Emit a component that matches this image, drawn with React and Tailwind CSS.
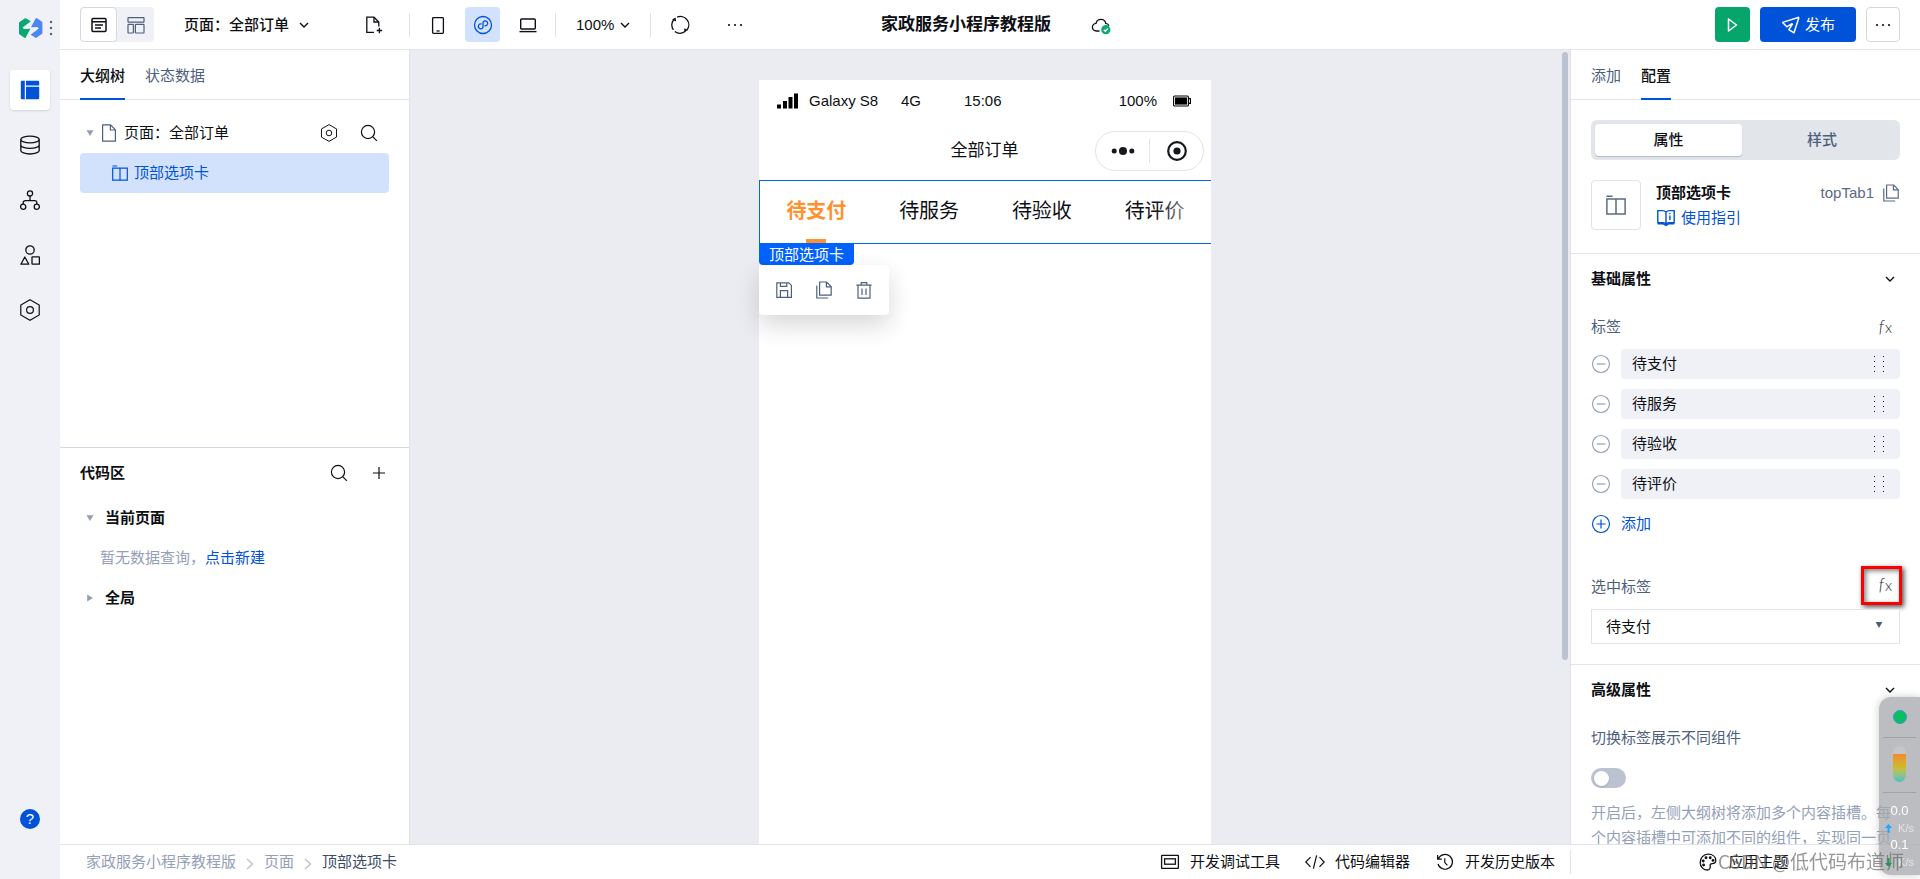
import { useState } from 'react';

function Svg({ size = 20, className = '', children, sw = 1.2 }) {
  return (
    <svg
      width={size}
      height={size}
      viewBox={`0 0 ${size} ${size}`}
      fill="none"
      stroke="currentColor"
      strokeWidth={sw}
      className={`shrink-0 ${className}`}
      aria-hidden="true"
    >
      {children}
    </svg>
  );
}

const Logo = () => (
  <svg width="24" height="20" viewBox="0 0 24 20" aria-hidden="true" className="shrink-0">
    <path d="M0 4.4 5.600.4q.8-.5 1.600 0l4.600 2.800L3.600 9.600 5 11l6.400-.2-4.600 8.600q-.6.8-1.400.4L0 16z" fill="#0aa872" />
    <path d="M23.400 15.600 17.800 19.600q-.8.5-1.600 0l-4.600-2.800 8.200-6.400L18.400 9l-6.400.2L16.600.6q.6-.8 1.400-.4L23.400 4z" fill="#4a87f2" />
  </svg>
);

const OutlineLayout = () => (
  <Svg sw={1.5}>
    <rect x="3" y="3.5" width="14" height="13" rx="1" />
    <path d="M3 6.8h14M6 10h8M6 13h6" />
  </Svg>
);
const GridLayout = () => (
  <Svg sw={1.2}>
    <rect x="2" y="2.6" width="16" height="4.6" rx=".5" />
    <rect x="2" y="9.4" width="5.4" height="8.6" rx=".5" />
    <rect x="9.4" y="9.4" width="8.6" height="8.6" rx=".5" />
  </Svg>
);
const Chevron = ({ className = '' }) => (
  <Svg size={10} sw={1.4} className={className}>
    <path d="m1 3 4 4 4-4" />
  </Svg>
);
const FilePlus = () => (
  <Svg sw={1.3}>
    <path d="M10 17.400H2.800V2.200H10l4.800 4.800v4.400" />
    <path d="M10 2.400V7h4.600M15.400 12.800v5.400M12.700 15.500h5.400" />
  </Svg>
);
const Phone = () => (
  <Svg sw={1.3}>
    <rect x="4.6" y="2.6" width="10.8" height="15.8" rx=".8" />
    <path d="M8.6 16h3" />
  </Svg>
);
const MiniProgram = () => (
  <Svg sw={1.3}>
    <circle cx="10" cy="10" r="8.500" />
    <path d="M8.600 9.100A2.400 2.400 0 1 0 10 12.200V7.600a2.400 2.400 0 1 1 1.500 3" />
  </Svg>
);
const Laptop = () => (
  <Svg sw={1.4}>
    <rect x="2.7" y="4" width="14.600" height="10" rx="1" />
    <path d="M1.500 16.600h17" />
  </Svg>
);
const Refresh = () => (
  <Svg sw={1.3}>
    <path d="M3.400 14.800A8.300 8.300 0 0 1 4.600 3.700M7.200 2.200a8.300 8.300 0 0 1 9.600 13M15.400 16.300A8.300 8.300 0 0 1 4.800 16.500" />
    <path d="m2.200 4.800 3.400-2.200.6 4zM17.900 15l-3.700-1.800.2 4z" fill="currentColor" stroke="none" />
  </Svg>
);
const Dots = () => (
  <Svg>
    <g fill="currentColor" stroke="none">
      <circle cx="4" cy="10" r="1.100" />
      <circle cx="10" cy="10" r="1.100" />
      <circle cx="16" cy="10" r="1.100" />
    </g>
  </Svg>
);
const CloudDone = () => (
  <Svg sw={1.300}>
    <path d="M8.500 16H5.400A3.800 3.800 0 0 1 5 8.400a5 5 0 0 1 9.800 0c1.700.2 2.800 1.200 3.200 2.400" />
    <circle cx="14.800" cy="14.700" r="4.600" fill="#0aa872" stroke="none" />
    <path d="m12.800 14.700 1.500 1.500 2.600-2.700" stroke="#fff" />
  </Svg>
);
const Play = () => (
  <Svg sw={1.500}>
    <path d="M6.500 4v12l8-6z" strokeLinejoin="round" />
  </Svg>
);
const Send = () => (
  <Svg sw={1.500}>
    <path d="M18 2.200 1.600 7.400l4.200 4.400 5.600-3.400M18 2.200 13 17.800l-5.200-3.200 4-6" strokeLinejoin="round" />
  </Svg>
);

const PanelSolid = () => (
  <Svg>
    <g fill="#0052d9" stroke="none">
      <path d="M2 .8h2.800v18.400H2A1.200 1.200 0 0 1 .8 18V2A1.200 1.200 0 0 1 2 .8z" />
      <path d="M6 .8h12A1.200 1.200 0 0 1 19.200 2v3.600H6zM6 6.800h13.200V18a1.200 1.200 0 0 1-1.200 1.200H6z" />
    </g>
  </Svg>
);
const Database = () => (
  <Svg sw={1.300}>
    <ellipse cx="10" cy="4.500" rx="9.200" ry="3.400" />
    <path d="M.8 4.500v11C.8 17.400 5 19 10 19s9.200-1.600 9.200-3.500v-11M.8 10c0 1.900 4.200 3.400 9.200 3.400s9.200-1.500 9.200-3.400" />
  </Svg>
);
const Flow = () => (
  <Svg sw={1.300}>
    <circle cx="10" cy="3.400" r="2.600" />
    <circle cx="3.200" cy="16.700" r="2.600" />
    <circle cx="16.800" cy="16.700" r="2.600" />
    <path d="M10 6v4.600M3.200 14v-1.400a2 2 0 0 1 2-2h9.600a2 2 0 0 1 2 2V14" />
  </Svg>
);
const Shapes = () => (
  <Svg sw={1.300}>
    <circle cx="10" cy="5" r="4.200" />
    <path d="M4.800 12 .9 19.200h7.900z" strokeLinejoin="round" />
    <rect x="12" y="11.800" width="7.400" height="7.400" rx=".5" />
  </Svg>
);
const Hexagon = ({ size = 20 }) => (
  <svg width={size} height={size} viewBox="0 0 20 22" fill="none" stroke="currentColor" strokeWidth="1.200" aria-hidden="true" className="shrink-0">
    <path d="M10 .8 19.200 6v10L10 21.200.8 16V6z" />
    <circle cx="10" cy="11" r="3.400" />
  </svg>
);
const Help = () => (
  <span className="flex size-5 items-center justify-center rounded-full bg-[#0052d9] text-[15px] leading-5 text-white">?</span>
);

const Caret = ({ open }) => (
  <svg width="8" height="8" viewBox="0 0 8 8" fill="#93a0b8" aria-hidden="true" className="shrink-0">
    {open ? <path d="M.4 1.200h7.200L4 7z" /> : <path d="M1.200.4v7.200L7 4z" />}
  </svg>
);
const FileIcon = () => (
  <Svg size={18} sw={1.200} className="text-[#4e5f7e]">
    <path d="M2.600.8h8l4.800 5v11.400H2.600z" strokeLinejoin="round" />
    <path d="M10.400 1v5h5" />
  </Svg>
);
const TabIcon = ({ size = 16 }) => (
  <svg width={size} height={size} viewBox="0 0 16 16" fill="none" stroke="currentColor" strokeWidth="1.200" aria-hidden="true" className="shrink-0">
    <path d="M.4 1h4.800M.7 3.200h14.600v11.900H.7zM8 3.200v11.900" />
  </svg>
);
const Search = () => (
  <Svg size={18}>
    <circle cx="8" cy="8" r="6.600" />
    <path d="m12.900 12.900 4 4" />
  </Svg>
);
const Plus = () => (
  <Svg size={18} sw={1.200}>
    <path d="M9 3v12M3 9h12" />
  </Svg>
);
const Save = () => (
  <Svg size={18} sw={1.200}>
    <path d="M1.800 1.800h12l2.600 2.600v12H1.800z" strokeLinejoin="round" />
    <path d="M5.400 2v3.400h6.400V2M5.400 16.200V9.600h7.200v6.600" />
  </Svg>
);
const Copy = () => (
  <Svg size={18} sw={1.200}>
    <path d="M4.600 1h7l4.600 4.600v8.600H4.600z" strokeLinejoin="round" />
    <path d="M11.400 1v4.800h4.800M1.800 4.400V17h11.400" />
  </Svg>
);
const Trash = () => (
  <Svg size={18} sw={1.200}>
    <path d="M1.400 4.200h15.200M6.200 4V1.600h5.600V4M3 4.200v13h12v-13M7 7.600V14M11 7.600V14" />
  </Svg>
);
const Book = () => (
  <Svg sw={1.400}>
    <path d="M10 4c-1-1-2-1.400-3.400-1.400H1.800v12.200h5.400c1.200 0 2.200.4 2.800 1.400.6-1 1.600-1.400 2.800-1.400h5.400V2.600h-4.800C12 2.600 11 3 10 4zM10 4v12" />
    <path d="M1.800 15.800h5.600L10 17.400l2.600-1.600h5.600M13.900 7.600V12M13.900 5v1.300" />
  </Svg>
);
const Minus = () => (
  <Svg>
    <circle cx="10" cy="10" r="8.500" />
    <path d="M5.600 10h8.800" />
  </Svg>
);
const PlusCircle = () => (
  <Svg>
    <circle cx="10" cy="10" r="8.500" />
    <path d="M5.400 10h9.200M10 5.400v9.200" />
  </Svg>
);
const Grip = () => (
  <svg width="11" height="18" viewBox="0 0 11 18" fill="#1a1f2b" aria-hidden="true" className="shrink-0">
    {[1, 6, 11, 16].map((y) => (
      <g key={y}>
        <rect x="0" y={y} width="1" height="1" />
        <rect x="9" y={y} width="1" height="1" />
      </g>
    ))}
  </svg>
);
const DebugTool = () => (
  <Svg sw={1.300}>
    <rect x="1.600" y="3.400" width="16.800" height="13" rx=".6" />
    <rect x="4.600" y="6.800" width="10.800" height="5.400" />
  </Svg>
);
const Code = () => (
  <Svg>
    <path d="M5.500 5.200.8 10l4.700 4.800M14.500 5.200l4.700 4.800-4.700 4.800M11.600 3.400 8.400 16.600" />
  </Svg>
);
const History = () => (
  <Svg>
    <path d="M3.400 6.600A7.400 7.400 0 1 1 3 12M2.600 3v4.200h4.200M9.800 6.200v4.400l2.600 2.800" />
  </Svg>
);
const Palette = () => (
  <Svg sw={1.300}>
    <path d="M10 2.200c4.600 0 7.800 2.600 7.800 6.400 0 2.400-1.600 3-3.600 3-1.600 0-2.400.8-2 2.400.4 2-.6 4-3 4-3.800 0-7-3.200-7-7.600S5.600 2.200 10 2.200z" />
    <circle cx="8" cy="5.800" r=".8" />
    <circle cx="12.200" cy="5.800" r=".8" />
    <circle cx="5.200" cy="9" r=".8" />
    <circle cx="5.600" cy="13" r=".8" />
    <circle cx="15" cy="8.400" r=".8" />
  </Svg>
);

function IconButton({ label, className = '', children }) {
  return (
    <button type="button" aria-label={label} className={`flex shrink-0 items-center justify-center ${className}`}>
      {children}
    </button>
  );
}

const Divider = () => <span className="h-6 w-px shrink-0 bg-[#dfe2e8]" />;

function Rail() {
  const items = [
    ['数据源', <Database />],
    ['流程', <Flow />],
    ['组件', <Shapes />],
    ['设置', <Hexagon size={22} />],
  ];
  return (
    <nav className="flex w-[60px] shrink-0 flex-col items-center bg-[#f0f1f6] pb-10">
      <div className="flex h-[55px] w-full items-center gap-1.5 pl-[19px]">
        <Logo />
        <svg width="4" height="16" viewBox="0 0 4 16" fill="#4e5f7e" aria-hidden="true">
          <circle cx="2" cy="2" r="1.200" />
          <circle cx="2" cy="8" r="1.200" />
          <circle cx="2" cy="14" r="1.200" />
        </svg>
      </div>
      <div className="flex flex-1 flex-col gap-[15px] pt-[15px]">
        <IconButton label="页面" className="size-10 rounded bg-white shadow-sm">
          <PanelSolid />
        </IconButton>
        {items.map(([label, icon]) => (
          <IconButton key={label} label={label} className="size-10">
            {icon}
          </IconButton>
        ))}
      </div>
      <IconButton label="帮助" className="size-10">
        <Help />
      </IconButton>
    </nav>
  );
}

function Header() {
  return (
    <header className="flex h-[50px] shrink-0 items-center border-b border-[#e1e4ea] px-5">
      <div className="flex flex-1 items-center">
        <div className="flex h-[35px] rounded bg-[#f0f1f6]">
          <IconButton label="大纲" className="w-[37px] rounded border border-[#d3d8e2] bg-white">
            <OutlineLayout />
          </IconButton>
          <IconButton label="布局" className="w-[37px] text-[#4e5f7e]">
            <GridLayout />
          </IconButton>
        </div>
        <button type="button" className="ml-[30px] flex items-center gap-[10px] font-medium">
          页面：全部订单
          <Chevron />
        </button>
        <IconButton label="新建页面" className="mr-5 ml-[50px] size-[30px]">
          <FilePlus />
        </IconButton>
        <Divider />
        <div className="mx-[10px] flex gap-[10px]">
          <IconButton label="手机" className="size-[35px]"><Phone /></IconButton>
          <IconButton label="小程序" className="size-[35px] rounded bg-[#d3e2fc] text-[#0052d9]"><MiniProgram /></IconButton>
          <IconButton label="电脑" className="size-[35px]"><Laptop /></IconButton>
        </div>
        <Divider />
        <button type="button" className="mx-5 flex items-center gap-1.5">
          100%
          <Chevron />
        </button>
        <Divider />
        <IconButton label="刷新" className="ml-[11px] size-[35px]"><Refresh /></IconButton>
        <IconButton label="更多" className="ml-5 size-[35px]"><Dots /></IconButton>
      </div>
      <div className="flex items-center gap-10 pl-3">
        <h1 className="text-[17px] leading-6 font-bold">家政服务小程序教程版</h1>
        <CloudDone />
      </div>
      <div className="flex flex-1 justify-end gap-[10px]">
        <IconButton label="预览" className="size-[35px] rounded bg-[#06a56c] text-white"><Play /></IconButton>
        <button type="button" className="flex h-[35px] items-center gap-1 rounded bg-[#0052d9] px-[21px] text-white">
          <Send />
          发布
        </button>
        <IconButton label="更多操作" className="h-[35px] w-[34px] rounded border border-[#d3d8e2]">
          <Dots />
        </IconButton>
      </div>
    </header>
  );
}

function Tabs({ items, active }) {
  return (
    <div className="flex h-[50px] shrink-0 gap-5 border-b border-[#e1e4ea] px-5">
      {items.map((t) => (
        <button
          key={t}
          type="button"
          className={
            t === active
              ? '-mb-px border-b-2 border-[#0052d9] pt-1 font-medium'
              : '-mb-px border-b-2 border-transparent pt-1 text-[#4e5f7e]'
          }
        >
          {t}
        </button>
      ))}
    </div>
  );
}

function LeftPanel() {
  return (
    <aside className="flex w-[350px] shrink-0 flex-col border-r border-[#dfe2e8]">
      <Tabs items={['大纲树', '状态数据']} active="大纲树" />
      <div className="h-[347px] shrink-0 px-5 pt-[13px]">
        <div className="flex h-10 items-center pl-1.5">
          <Caret open />
          <span className="mr-1.5 ml-1.5 flex"><FileIcon /></span>
          <span className="flex-1">页面：全部订单</span>
          <IconButton label="页面设置" className="size-10"><Hexagon size={18} /></IconButton>
          <IconButton label="搜索" className="size-10"><Search /></IconButton>
        </div>
        <button type="button" className="flex h-10 w-full items-center gap-1.5 rounded bg-[#d3e2fc] pl-8 text-[#0052d9]">
          <TabIcon />
          顶部选项卡
        </button>
      </div>
      <section className="flex-1 border-t border-[#d3d8e2] px-5">
        <div className="-mr-2.5 flex h-[50px] items-center">
          <h2 className="flex-1 font-bold">代码区</h2>
          <IconButton label="搜索代码" className="size-10"><Search /></IconButton>
          <IconButton label="新建代码" className="size-10"><Plus /></IconButton>
        </div>
        <button type="button" className="flex h-10 items-center gap-[11px] pl-1.5 font-bold">
          <Caret open />
          当前页面
        </button>
        <p className="flex h-10 items-center pl-5 text-[#93a0b8]">
          暂无数据查询，
          <a href="#new" className="text-[#0052d9]">点击新建</a>
        </p>
        <button type="button" className="flex h-10 items-center gap-[11px] pl-1.5 font-bold">
          <Caret />
          全局
        </button>
      </section>
    </aside>
  );
}

function Canvas() {
  const tabs = ['待支付', '待服务', '待验收', '待评价'];
  return (
    <main className="relative flex min-w-0 flex-1 justify-center bg-[#ebecf1] pt-[30px] pr-[10px]">
      <div className="flex w-[452px] flex-col bg-white">
        <div className="flex h-[42px] items-center pr-5 pl-[18px]">
          <svg width="22" height="16" viewBox="0 0 22 16" aria-hidden="true">
            <path d="M0 11.500h4v4H0zM6 8h4v7.500H6zM11.500 4h4v11.500h-4zM17 .5h4v15h-4z" />
          </svg>
          <span className="ml-[10px] w-[92px]">Galaxy S8</span>
          <span className="w-[63px]">4G</span>
          <span className="flex-1">15:06</span>
          <span>100%</span>
          <svg width="18" height="12" viewBox="0 0 18 12" aria-hidden="true" className="ml-4">
            <rect x=".6" y="1" width="14.800" height="10" rx="1" fill="none" stroke="#000" strokeWidth="1.100" />
            <rect x="2" y="2.400" width="12" height="7.200" />
            <path d="M15.600 3.600h1.800v4.800h-1.800" fill="none" stroke="#000" strokeWidth="1.100" />
          </svg>
        </div>
        <div className="grid h-[58px] grid-cols-[1fr_auto_1fr] items-center pr-[7px]">
          <span />
          <span className="pl-1.5 text-[17px] leading-6">全部订单</span>
          <div className="flex h-10 w-[109px] items-center justify-self-end rounded-full border border-[#e3e4ea]">
            <IconButton label="菜单" className="flex-1">
              <svg width="24" height="10" viewBox="0 0 24 10" fill="#16181c" aria-hidden="true">
                <circle cx="3.200" cy="5" r="2.500" />
                <circle cx="12" cy="5" r="4" />
                <circle cx="20.800" cy="5" r="2.500" />
              </svg>
            </IconButton>
            <span className="h-6 w-px bg-[#e3e4ea]" />
            <IconButton label="关闭" className="flex-1">
              <svg width="20" height="20" viewBox="0 0 20 20" aria-hidden="true">
                <circle cx="10" cy="10" r="8.800" fill="none" stroke="#16181c" strokeWidth="2.200" />
                <circle cx="10" cy="10" r="3.600" fill="#16181c" />
              </svg>
            </IconButton>
          </div>
        </div>
        <div className="relative grid h-16 grid-cols-4 border-y border-l border-[#0062ff] text-xl">
          {tabs.map((t, i) => (
            <button
              key={t}
              type="button"
              className={i === 0 ? 'flex flex-col items-center font-bold text-[#ff9130]' : 'flex flex-col items-center'}
            >
              <span className="flex flex-1 items-center pt-0.5">{t}</span>
              <span className={i === 0 ? 'h-1 w-5 bg-[#ff9130]' : 'h-1 w-5'} />
            </button>
          ))}
          <span className="pointer-events-none absolute inset-y-0 right-0 w-14 bg-linear-to-r from-white/0 to-white/90" />
        </div>
        <div className="flex h-[21px] w-[95px] items-center justify-center rounded-b bg-[#0062ff] text-white">顶部选项卡</div>
        <div className="flex h-[50px] w-[130px] items-center rounded bg-white px-[5px] text-[#4e5f7e] shadow-[0_10px_24px_rgba(0,0,0,0.16)]">
          <IconButton label="保存" className="size-10"><Save /></IconButton>
          <IconButton label="复制" className="size-10"><Copy /></IconButton>
          <IconButton label="删除" className="size-10"><Trash /></IconButton>
        </div>
      </div>
      <div className="absolute top-0.5 right-0.5 h-[608px] w-1.5 rounded-full bg-[#bbc3d1]" />
    </main>
  );
}

const Fx = () => (
  <span className="flex items-baseline font-['Lato',sans-serif] text-[17px] leading-5 font-light text-[#1a1f2b]">
    <i className="pr-px">f</i>
    <span className="text-[15px]">x</span>
  </span>
);

function SectionTitle({ children }) {
  return (
    <button type="button" className="flex h-[50px] w-full items-center justify-between pr-[5px] font-bold">
      {children}
      <Chevron />
    </button>
  );
}

function RightPanel() {
  const [on, setOn] = useState(false);
  const labels = ['待支付', '待服务', '待验收', '待评价'];
  return (
    <aside className="flex w-[350px] shrink-0 flex-col overflow-hidden border-l border-[#dfe2e8]">
      <Tabs items={['添加', '配置']} active="配置" />
      <div className="shrink-0 px-5 pt-5 pb-[23px]">
        <div className="flex h-10 rounded-md bg-[#e2e5ea] p-1 font-medium">
          <button type="button" className="w-[147px] rounded-sm bg-white shadow-[0_1px_1px_#b4bcc9]">属性</button>
          <button type="button" className="flex-1 pl-1.5 text-[#4e5f7e]">样式</button>
        </div>
        <div className="mt-5 flex">
          <span className="flex size-[50px] items-center justify-center rounded border border-[#dfe2e8] text-[#5a6a86]">
            <TabIcon size={20} />
          </span>
          <div className="ml-[15px] flex-1">
            <h2 className="leading-[25px] font-bold">顶部选项卡</h2>
            <a href="#guide" className="flex items-center gap-[5px] leading-[25px] text-[#0052d9]">
              <Book />
              使用指引
            </a>
          </div>
          <div className="flex h-[25px] items-center gap-2 text-[#5a6a86]">
            topTab1
            <Copy />
          </div>
        </div>
      </div>
      <section className="shrink-0 border-t border-[#e1e4ea] px-5 pb-5">
        <SectionTitle>基础属性</SectionTitle>
        <div className="flex h-[45px] items-center justify-between pr-2 text-[#4e5f7e]">
          标签
          <button type="button" aria-label="标签绑定表达式"><Fx /></button>
        </div>
        <ul className="flex flex-col gap-[10px]">
          {labels.map((l) => (
            <li key={l} className="flex h-[30px] items-center gap-[10px]">
              <IconButton label={`删除${l}`} className="text-[#93a0b8]"><Minus /></IconButton>
              <span className="flex h-full flex-1 items-center justify-between rounded bg-[#f0f1f6] pr-[15px] pl-[11px]">
                {l}
                <Grip />
              </span>
            </li>
          ))}
        </ul>
        <button type="button" className="mt-[10px] flex h-[30px] items-center gap-[10px] text-[#0052d9]">
          <PlusCircle />
          添加
        </button>
        <div className="mt-[26px] flex h-10 items-center justify-between text-[#4e5f7e]">
          <label htmlFor="selected-tab" className="pt-1">选中标签</label>
          <button
            type="button"
            aria-label="选中标签绑定表达式"
            className="-mr-0.5 flex h-[39px] w-[41px] items-center justify-end border-3 border-[#fe0000] pr-[7px] shadow-[2px_2px_5px_rgba(0,0,0,0.7),inset_2px_2px_5px_rgba(0,0,0,0.5)]"
          >
            <Fx />
          </button>
        </div>
        <div className="relative mt-1">
          <select id="selected-tab" className="h-[35px] w-full appearance-none border border-[#e1e4ea] bg-white pl-3.5">
            {labels.map((l) => (
              <option key={l}>{l}</option>
            ))}
          </select>
          <svg width="8" height="8" viewBox="0 0 8 8" fill="#4e5f7e" aria-hidden="true" className="pointer-events-none absolute top-3 right-[17px]">
            <path d="M.6 1h6.800L4 7z" />
          </svg>
        </div>
      </section>
      <section className="border-t border-[#e1e4ea] px-5">
        <SectionTitle>高级属性</SectionTitle>
        <label htmlFor="switch-content" className="flex h-[46px] items-center text-[#4e5f7e]">
          切换标签展示不同组件
        </label>
        <label className="mt-[7px] flex h-5 w-[35px] cursor-pointer">
          <input
            id="switch-content"
            type="checkbox"
            checked={on}
            onChange={() => setOn(!on)}
            className="peer sr-only"
          />
          <span className="flex h-5 w-[35px] items-center rounded-full bg-[#bbc3d1] px-[3px] peer-checked:justify-end peer-checked:bg-[#0052d9]">
            <span className="size-[15px] rounded-full bg-white shadow-sm" />
          </span>
        </label>
        <p className="mt-3 leading-[25px] text-[#93a0b8]">
          开启后，左侧大纲树将添加多个内容插槽。每个内容插槽中可添加不同的组件，实现同一页
        </p>
      </section>
    </aside>
  );
}

const CrumbArrow = () => (
  <svg width="8" height="12" viewBox="0 0 8 12" fill="none" stroke="#bbc3d1" strokeWidth="1.400" aria-hidden="true" className="mt-1">
    <path d="m1 1 5.500 5L1 11" />
  </svg>
);

function Footer() {
  return (
    <footer className="flex h-[35px] shrink-0 items-center border-t border-[#e1e4ea]">
      <nav className="flex w-[350px] shrink-0 items-center gap-[10px] pl-[26px] text-[#93a0b8]">
        <a href="#app">家政服务小程序教程版</a>
        <CrumbArrow />
        <a href="#page">页面</a>
        <CrumbArrow />
        <a href="#tab" className="text-[#3c4a66]">顶部选项卡</a>
      </nav>
      <div className="flex flex-1 justify-end gap-[25px] pr-[15px]">
        <button type="button" className="flex items-center gap-[10px]"><DebugTool />开发调试工具</button>
        <button type="button" className="flex items-center gap-[10px]"><Code />代码编辑器</button>
        <button type="button" className="flex items-center gap-[10px]"><History />开发历史版本</button>
      </div>
      <Divider />
      <div className="flex w-[349px] shrink-0 justify-center pr-1">
        <button type="button" className="flex items-center gap-[10px]"><Palette />应用主题</button>
      </div>
    </footer>
  );
}

function Speed({ value, up }) {
  return (
    <div className="flex flex-col items-center text-white">
      <span className="text-[13px] leading-4">{value}</span>
      <span className="flex items-center gap-1.5 text-[11px] leading-[18px] text-[#e4e5e8]">
        <svg width="7" height="9" viewBox="0 0 7 9" fill={up ? '#1ea7ff' : '#12a150'} aria-hidden="true">
          {up ? <path d="M3.500 0 7 4H4.500v5h-2V4H0z" /> : <path d="M3.500 9 0 5h2.500V0h2v5H7z" />}
        </svg>
        K/s
      </span>
    </div>
  );
}

function SpeedWidget() {
  return (
    <div className="fixed right-0 bottom-1 flex h-[178px] w-[41px] flex-col items-center rounded-l-xl bg-[#a5a7ac]/75 shadow-[0_0_8px_rgba(0,0,0,0.2)]">
      <span className="mt-[13px] size-3.5 rounded-full border border-[#3f8fd0] bg-[#07c160]" />
      <span className="mt-[13px] h-px w-[33px] bg-[#a0a4aa]" />
      <span className="mt-2 flex h-9 w-[13px] flex-col overflow-hidden rounded-full bg-[#c4c6ca] pt-2">
        <span className="flex-1 bg-linear-to-b from-[#f08a2c] via-[#c9bd2c] to-[#3cc0c4]" />
      </span>
      <span className="mt-[10px] mb-[10px] h-px w-[33px] bg-[#a0a4aa]" />
      <Speed value="0.0" up />
      <Speed value="0.1" />
    </div>
  );
}

export default function App() {
  return (
    <div className="flex h-screen overflow-hidden bg-white font-['Liberation_Sans','Noto_Sans_CJK_SC',sans-serif] text-[15px] leading-5 text-[#0d0f14]">
      <Rail />
      <div className="flex min-w-0 flex-1 flex-col">
        <Header />
        <div className="flex min-h-0 flex-1">
          <LeftPanel />
          <Canvas />
          <RightPanel />
        </div>
        <Footer />
      </div>
      <SpeedWidget />
      <span className="pointer-events-none fixed right-4 bottom-1.5 font-['Noto_Sans_CJK_SC',sans-serif] text-[19px] leading-6 text-[#6b6b6b]/70">
        CSDN @低代码布道师
      </span>
    </div>
  );
}
